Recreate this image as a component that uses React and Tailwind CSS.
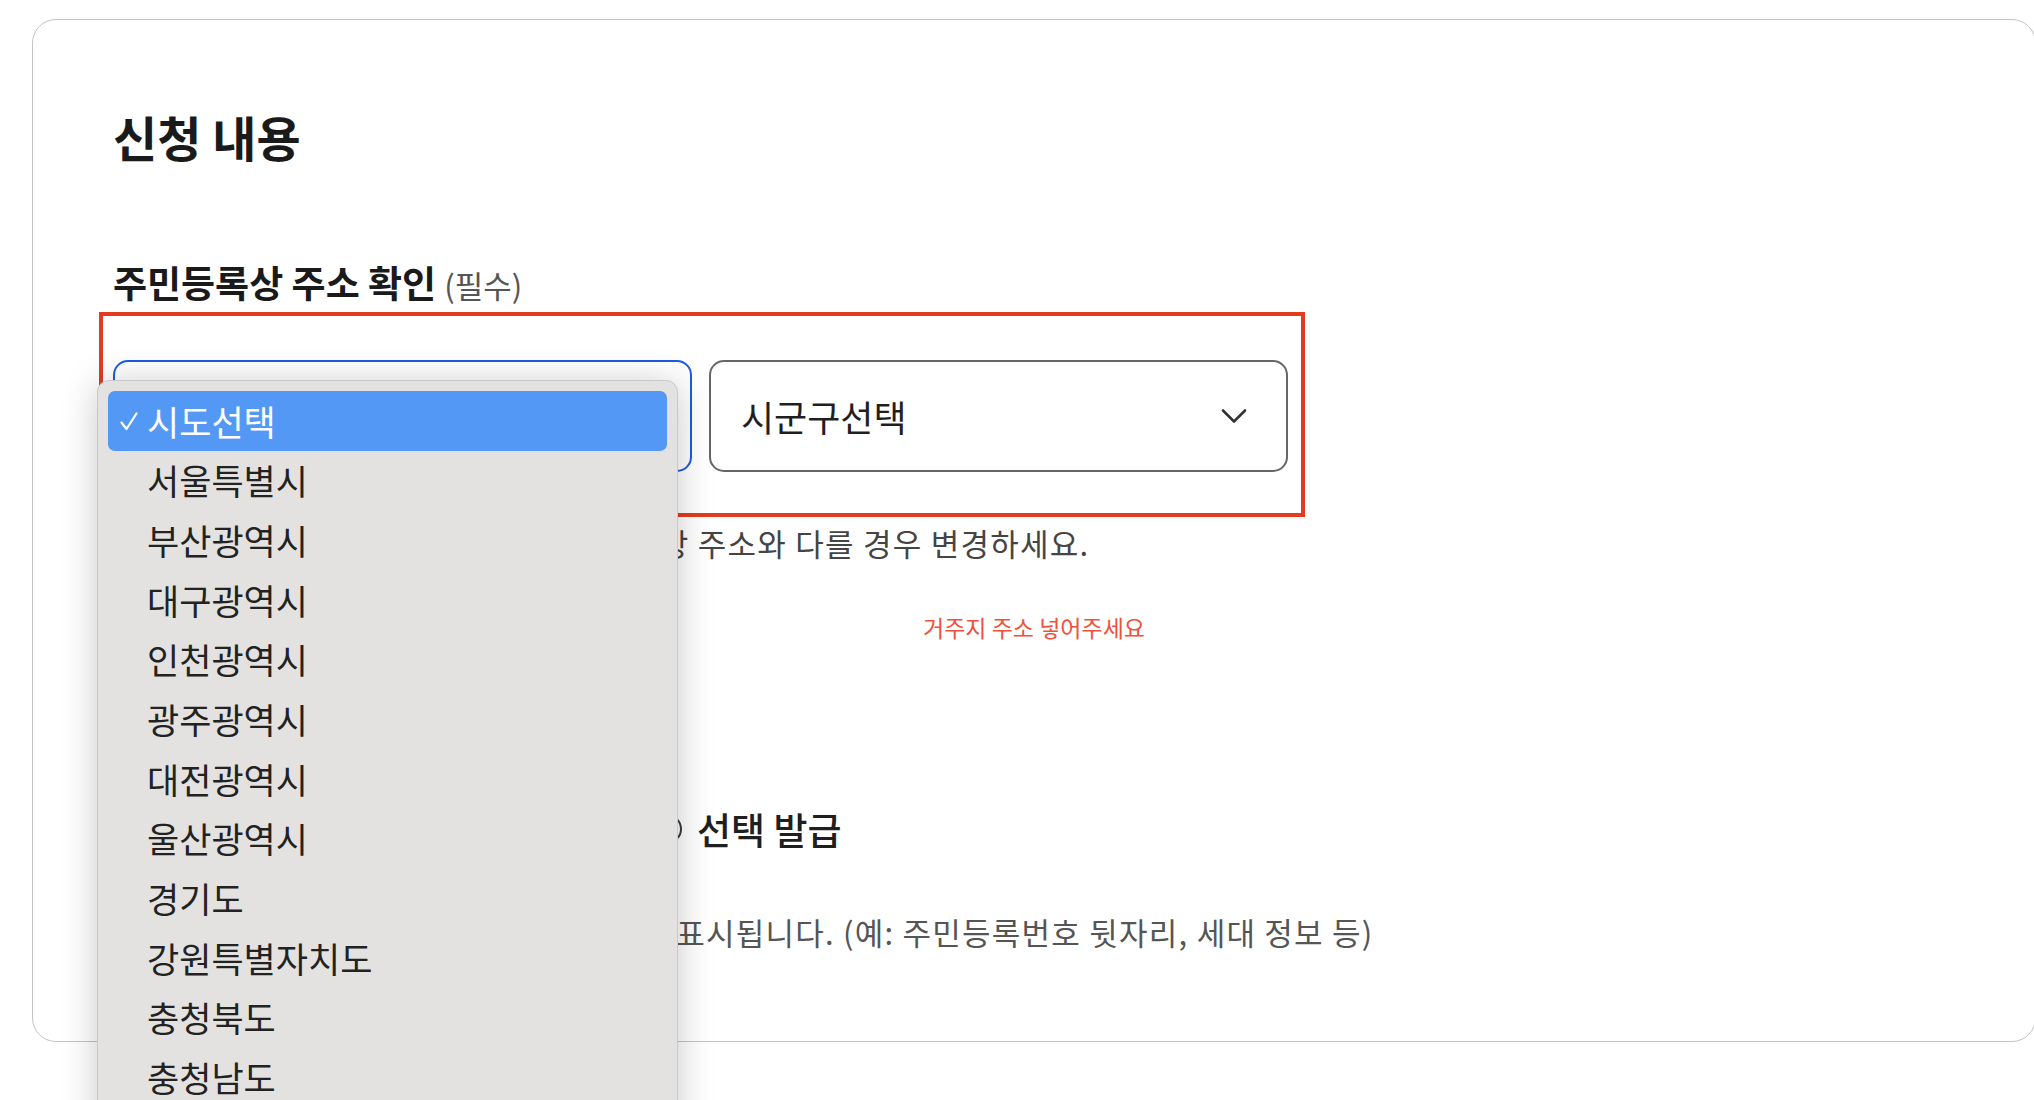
import { useState } from 'react'

const SIDO = [
  '시도선택',
  '서울특별시',
  '부산광역시',
  '대구광역시',
  '인천광역시',
  '광주광역시',
  '대전광역시',
  '울산광역시',
  '경기도',
  '강원특별자치도',
  '충청북도',
  '충청남도',
]

const FONT = "font-['Noto_Sans_CJK_KR','Noto_Sans',sans-serif]"

function Radio({ checked, label, className = '' }) {
  return (
    <label className={`flex items-center gap-[15px] ${className}`}>
      <span className="flex h-[30px] w-[30px] items-center justify-center rounded-full border-2 border-[#3a3a3a]">
        {checked && <span className="h-[14px] w-[14px] rounded-full bg-[#1c5ce0]" />}
      </span>
      <span className="text-[37px] font-medium leading-[44px] text-[#1f1f1f]">{label}</span>
    </label>
  )
}

// 네이티브 select 팝업 모양 그대로 흉내
function SidoPopup({ selected }) {
  return (
    <div className="absolute left-[97px] top-[380px] h-[800px] w-[581px] rounded-[12px] border border-[#c9c9c9] bg-[#e3e2e1] px-[10px] pt-[10px] shadow-[0_4px_36px_rgba(0,0,0,0.22)]">
      {SIDO.map((s, i) => (
        <div
          key={s}
          className={`flex h-[59.7px] items-center gap-[8px] rounded-[7px] pl-[11px] text-[35px] ${
            i === selected ? 'bg-[#5498f6] text-white' : 'text-[#222]'
          }`}
        >
          <span className="flex w-[20px] justify-center">
            {i === selected && (
              <svg viewBox="0 0 20 20" fill="none" stroke="currentColor" strokeWidth="2.2" strokeLinecap="round" strokeLinejoin="round" className="h-[20px] w-[20px]">
                <path d="M2.5 11.5 7.5 18 17.5 2.5" />
              </svg>
            )}
          </span>
          <span>{s}</span>
        </div>
      ))}
    </div>
  )
}

export default function App() {
  const [sido] = useState(0)

  return (
    <div className={`relative h-[1100px] w-full overflow-hidden bg-white ${FONT}`}>
      <div className="ml-[32px] mt-[19px] w-[2004px] rounded-[24px] border-[1.5px] border-[#c4c4c4] px-[80px] pb-[90px] pt-[88px]">
        <h2 className="text-[48px] font-bold leading-[56px] text-[#1a1a1a]">신청 내용</h2>

        <p className="mt-[96px] flex items-baseline gap-[8px] leading-[44px]">
          <span className="text-[37px] font-bold text-[#1a1a1a]">주민등록상 주소 확인</span>
          <span className="text-[31px] text-[#555]">(필수)</span>
        </p>

        {/* 검토 표시 박스 */}
        <div className="-ml-[14px] mt-[5px] w-[1206px] border-4 border-[#e63a1f] pb-[41px] pl-[10px] pr-[13px] pt-[44px]">
          <div className="grid grid-cols-2 gap-[17px]">
            <div className="h-[112px] rounded-[15px] border-2 border-[#1c5ce0]" />
            <div className="flex h-[112px] items-center justify-between rounded-[15px] border-2 border-[#666] pl-[30px] pr-[39px]">
              <span className="text-[36px] text-[#1f1f1f]">시군구선택</span>
              <svg viewBox="0 0 26 16" fill="none" stroke="#333" strokeWidth="2.6" strokeLinecap="round" strokeLinejoin="round" className="h-[16px] w-[26px]">
                <path d="M2 2.5 13 13.5 24 2.5" />
              </svg>
            </div>
          </div>
        </div>

        <p className="mt-[7px] text-[31px] leading-[38px] tracking-[0.04em] text-[#444]">
          <span className="tracking-[-0.04em]">현재 실제로 거주하고 계시는 주소가 주민등록</span>
          상 주소와 다를 경우 변경하세요.
        </p>

        <p className="mt-[50px] text-center text-[23px] leading-[30px] text-[#f0503c]">
          거주지 주소 넣어주세요
        </p>

        <p className="mt-[79px] text-[37px] font-bold leading-[44px] text-[#1a1a1a]">발급 유형</p>

        <div className="mt-[42px] flex items-center">
          <Radio checked label="전체 발급" className="w-[539px]" />
          <Radio label="선택 발급" />
        </div>

        <p className="mt-[62px] text-[31px] leading-[38px] tracking-[0.04em] text-[#555]">
          선택 발급 시 일부 개인정보는 가려진 채로 표시됩니다. (예: 주민등록번호 뒷자리, 세대 정보 등)
        </p>
      </div>

      <SidoPopup selected={sido} />
    </div>
  )
}
